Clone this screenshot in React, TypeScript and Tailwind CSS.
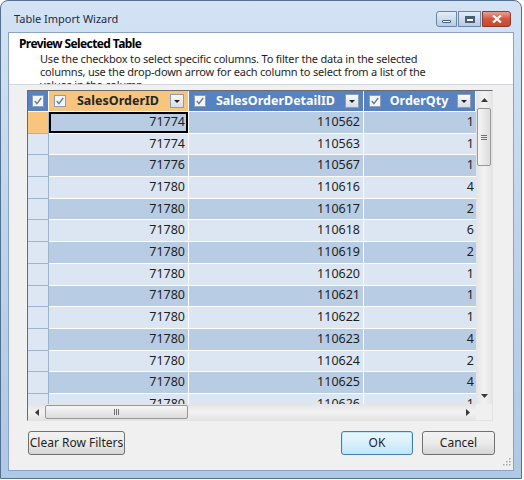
import React from "react";

const rows: [string, string, string][] = [
  ["71774", "110562", "1"],
  ["71774", "110563", "1"],
  ["71776", "110567", "1"],
  ["71780", "110616", "4"],
  ["71780", "110617", "2"],
  ["71780", "110618", "6"],
  ["71780", "110619", "2"],
  ["71780", "110620", "1"],
  ["71780", "110621", "1"],
  ["71780", "110622", "1"],
  ["71780", "110623", "4"],
  ["71780", "110624", "2"],
  ["71780", "110625", "4"],
  ["71780", "110626", "1"],
];

function Check() {
  return (
    <svg width="12" height="12" viewBox="0 0 12 12" className="shrink-0">
      <rect x="0.5" y="0.5" width="11" height="11" fill="#f3f6fa" stroke="#8d9db5" />
      <path d="M2.8 6 L4.9 8.6 L9.2 3" fill="none" stroke="#667aa0" strokeWidth="1.4" />
    </svg>
  );
}

function Drop() {
  return (
    <div className="flex h-[14px] w-[14px] shrink-0 items-center justify-center border border-[#8e9bb0] bg-gradient-to-b from-[#f8f9fb] to-[#d6dce5]">
      <svg width="6" height="3" viewBox="0 0 6 3"><path d="M0 0h6L3 3z" fill="#1f1f1f" /></svg>
    </div>
  );
}

function HeadCell({ label, width, active }: { label: string; width: string; active?: boolean }) {
  return (
    <div className={`${width} flex h-full shrink-0 items-center gap-1 border-r border-white pl-[5px] pr-[4px] ${active ? "bg-[#f8c57f] text-[#262626]" : "bg-[#5682c1] text-white"}`}>
      <Check />
      <span className="flex-1 whitespace-nowrap text-center text-[12.5px] font-bold">{label}</span>
      <Drop />
    </div>
  );
}

function Arrow({ dir }: { dir: "up" | "down" | "left" | "right" }) {
  const d = { up: "M0 4h7L3.5 0z", down: "M0 0h7L3.5 4z", left: "M4 0v7L0 3.5z", right: "M0 0v7L4 3.5z" }[dir];
  const vertical = dir === "up" || dir === "down";
  return (
    <svg width={vertical ? 7 : 4} height={vertical ? 4 : 7} viewBox={vertical ? "0 0 7 4" : "0 0 4 7"}>
      <path d={d} fill="#3a3a3a" />
    </svg>
  );
}

function TitleButtons() {
  return (
    <div className="flex items-start gap-[1px] self-start pt-[10px]">
      <div className="flex h-[16px] w-[21px] items-center justify-center rounded-l-[3px] border border-[#6d86a6] bg-gradient-to-b from-[#e3edf8] to-[#b7cbe3]">
        <div className="mt-[4px] h-[3px] w-[9px] rounded-[1px] border border-[#4a5d78] bg-white" />
      </div>
      <div className="flex h-[16px] w-[23px] items-center justify-center border border-[#6d86a6] bg-gradient-to-b from-[#e3edf8] to-[#b7cbe3]">
        <div className="h-[7px] w-[10px] border-2 border-t-[3px] border-[#4a5d78] bg-white" />
      </div>
      <div className="flex h-[16px] w-[29px] items-center justify-center rounded-r-[3px] border border-[#8a3a2c] bg-gradient-to-b from-[#e8a08f] via-[#d2553c] to-[#c24a30]">
        <svg width="10" height="8" viewBox="0 0 10 8">
          <path d="M1 0.5 L9 7.5 M9 0.5 L1 7.5" stroke="#ffffff" strokeWidth="2.2" />
        </svg>
      </div>
    </div>
  );
}

export default function App() {
  return (
    <div className="h-[480px] w-[524px] bg-white font-['Noto_Sans','Liberation_Sans',sans-serif]">
      <div className="flex h-[479px] w-[522px] flex-col rounded-t-[8px] border border-[#55708f] bg-gradient-to-b from-[#d3e3f4] via-[#bed4ec] to-[#aec8e6] px-[7px] pb-[7px]">
        <div className="flex h-[31px] shrink-0 justify-between pl-[6px] pr-[3px]">
          <span className="pt-[10px] text-[11px] text-[#1c2a44]">Table Import Wizard</span>
          <TitleButtons />
        </div>

        <div className="relative flex flex-1 flex-col border border-[#8aa3c2] bg-[#f0f0f0]">
          <div className="h-[52px] shrink-0 overflow-hidden border-b border-[#d5d9de] bg-white pl-[10px] pt-[4px]">
            <div className="text-[12px] font-bold leading-[14px] tracking-[-0.6px] text-black">Preview Selected Table</div>
            <div className="mt-[1px] pl-[21px] text-[11px] leading-[13px] tracking-[-0.2px] text-[#1e1e1e]">
              <div>Use the checkbox to select specific columns. To filter the data in the selected</div>
              <div>columns, use the drop-down arrow for each column to select from a list of the</div>
              <div>values in the column.</div>
            </div>
          </div>

          <div className="ml-[18px] mt-[5px] flex h-[331px] w-[466px] flex-col border border-b-[#e3e3e3] border-l-[#6b6b6b] border-r-[#e3e3e3] border-t-[#6b6b6b] text-[#1e1e1e]">
            <div className="flex h-[313px]">
              <div className="flex w-[448px] flex-col overflow-hidden">
                <div className="flex h-[21px] shrink-0 border-b border-white">
                  <div className="flex w-[21px] shrink-0 items-center justify-center border-r border-white bg-[#5682c1]">
                    <Check />
                  </div>
                  <HeadCell label="SalesOrderID" width="w-[140px]" active />
                  <HeadCell label="SalesOrderDetailID" width="w-[175px]" />
                  <HeadCell label="OrderQty" width="w-[112px]" />
                </div>
                {rows.map((r, i) => (
                  <div key={i} className="flex h-[21.7px] shrink-0 text-[12.5px]">
                    <div className={`w-[21px] shrink-0 border-b border-r border-[#9db3ce] ${i === 0 ? "bg-[#f8c57f]" : "bg-[#dde7f3]"}`} />
                    <div className={`relative flex w-[140px] shrink-0 items-center justify-end border-b border-r border-white pr-[3px] ${i % 2 === 0 ? "bg-[#b8cce4]" : "bg-[#dce6f2]"}`}>
                      {i === 0 && <div className="absolute inset-0 border-2 border-black" />}
                      {r[0]}
                    </div>
                    <div className={`flex w-[175px] shrink-0 items-center justify-end border-b border-r border-white pr-[3px] ${i % 2 === 0 ? "bg-[#b8cce4]" : "bg-[#dce6f2]"}`}>
                      {r[1]}
                    </div>
                    <div className={`flex w-[112px] shrink-0 items-center justify-end border-b border-white pr-[2px] ${i % 2 === 0 ? "bg-[#b8cce4]" : "bg-[#dce6f2]"}`}>
                      {r[2]}
                    </div>
                  </div>
                ))}
              </div>
              <div className="flex w-[16px] flex-col items-center bg-gradient-to-r from-[#e4e4e4] via-[#f2f2f2] to-[#e4e4e4]">
                <div className="flex h-[17px] items-center justify-center"><Arrow dir="up" /></div>
                <div className="flex h-[58px] w-[14px] items-center justify-center rounded-[2px] border border-[#979797] bg-gradient-to-r from-[#f6f6f6] to-[#dcdcdc]">
                  <div className="flex flex-col gap-[1px]">
                    <div className="h-[1px] w-[6px] bg-[#6f6f6f]" />
                    <div className="h-[1px] w-[6px] bg-[#6f6f6f]" />
                    <div className="h-[1px] w-[6px] bg-[#6f6f6f]" />
                  </div>
                </div>
                <div className="flex-1" />
                <div className="flex h-[16px] items-center justify-center"><Arrow dir="down" /></div>
              </div>
            </div>
            <div className="flex h-[16px]">
              <div className="flex w-[448px] items-center bg-gradient-to-b from-[#e4e4e4] via-[#f2f2f2] to-[#e4e4e4]">
                <div className="flex w-[17px] justify-center"><Arrow dir="left" /></div>
                <div className="flex h-[14px] w-[143px] items-center justify-center rounded-[2px] border border-[#979797] bg-gradient-to-b from-[#f6f6f6] to-[#dcdcdc]">
                  <div className="flex gap-[1px]">
                    <div className="h-[6px] w-[1px] bg-[#6f6f6f]" />
                    <div className="h-[6px] w-[1px] bg-[#6f6f6f]" />
                    <div className="h-[6px] w-[1px] bg-[#6f6f6f]" />
                  </div>
                </div>
                <div className="flex-1" />
                <div className="flex w-[16px] justify-center"><Arrow dir="right" /></div>
              </div>
              <div className="w-[16px] bg-[#f0f0f0]" />
            </div>
          </div>

          <div className="ml-[19px] mr-[18px] mt-[10px] flex items-center text-[12px] text-[#1e1e1e]">
            <button className="h-[24px] w-[97px] rounded-[3px] border border-[#707070] bg-gradient-to-b from-[#f2f2f2] via-[#ebebeb] to-[#d6d6d6]">Clear Row Filters</button>
            <div className="flex-1" />
            <button className="h-[24px] w-[72px] rounded-[3px] border border-[#3c7fb1] bg-gradient-to-b from-[#eaf6fd] via-[#d9f0fc] to-[#bee6fd] shadow-[inset_0_0_0_1px_#c4e5f6]">OK</button>
            <button className="ml-[9px] h-[24px] w-[73px] rounded-[3px] border border-[#707070] bg-gradient-to-b from-[#f2f2f2] via-[#ebebeb] to-[#d6d6d6]">Cancel</button>
          </div>

          <svg width="10" height="10" viewBox="0 0 10 10" className="absolute bottom-[2px] right-[2px]">
            <g fill="#a8a8a8">
              <rect x="8" y="0" width="1.5" height="1.5" />
              <rect x="5" y="3" width="1.5" height="1.5" /><rect x="8" y="3" width="1.5" height="1.5" />
              <rect x="2" y="6" width="1.5" height="1.5" /><rect x="5" y="6" width="1.5" height="1.5" /><rect x="8" y="6" width="1.5" height="1.5" />
            </g>
          </svg>
        </div>
      </div>
    </div>
  );
}
